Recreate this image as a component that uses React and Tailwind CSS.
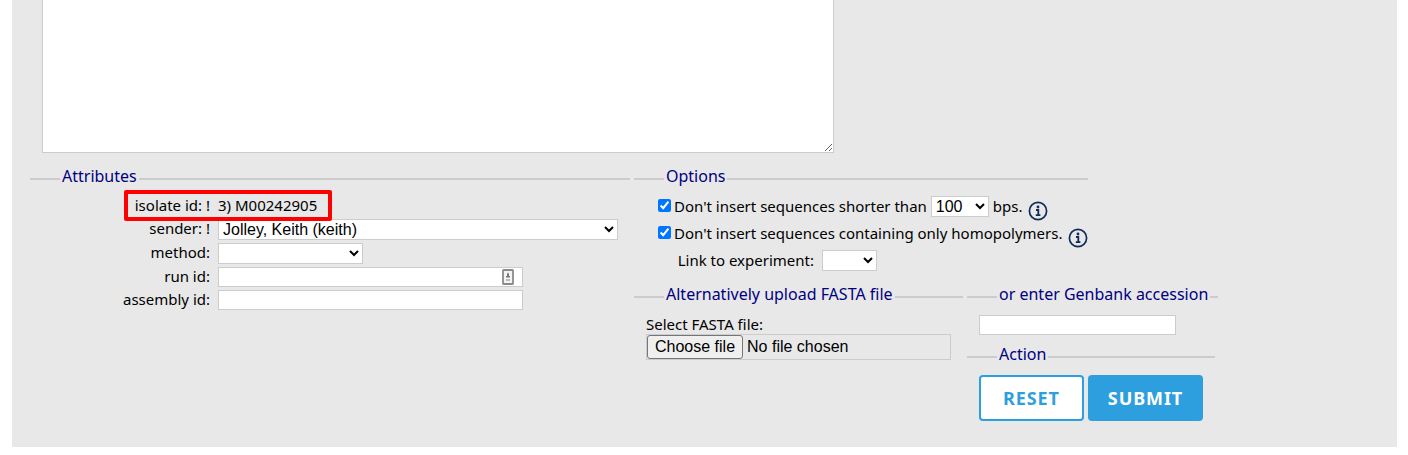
import { useState } from "react";

const control = "border border-[#ccc] bg-white font-['Liberation_Sans',sans-serif] text-base leading-5 text-black";

function Section({ title, className, children }) {
  return (
    <fieldset className={`min-w-0 border-t-2 border-[#ccc] ${className}`}>
      <legend className="ml-[30px] px-0.5 pb-1.5 font-['Noto_Sans',sans-serif] text-base leading-4 whitespace-nowrap text-[#000080]">{title}</legend>
      {children}
    </fieldset>
  );
}

function Info() {
  return (
    <button type="button" aria-label="Information" className="mt-2 ml-1.5 h-5 w-5 shrink-0 text-[#0f2c59]">
      <svg viewBox="0 0 20 20" className="h-5 w-5" fill="none" stroke="currentColor">
        <circle cx="10" cy="10" r="8.6" strokeWidth="1.7" />
        <circle cx="10" cy="6" r="1.4" fill="currentColor" stroke="none" />
        <path d="M8 9h2.3v5M7.8 14.2h4.6" strokeWidth="1.8" />
      </svg>
    </button>
  );
}

function Row({ id, label, className, children }) {
  return (
    <div className={`flex items-center ${className}`}>
      <label htmlFor={id} className="w-[180px] pb-0.5 text-right">{label}</label>
      <div className="ml-2 flex min-w-0 items-center">{children}</div>
    </div>
  );
}

export default function App() {
  const [sequence, setSequence] = useState("");
  return (
    <main className="bg-white pr-[11px] pb-2 pl-3 font-['Noto_Sans',sans-serif] text-[15px] leading-5 text-black">
      <form className="bg-[#e8e8e8] pb-[26px] pl-[18px]" onSubmit={(e) => e.preventDefault()}>
        <textarea
          aria-label="Sequence"
          value={sequence}
          onChange={(e) => setSequence(e.target.value)}
          className="ml-3 block h-[153px] w-[792px] max-w-full border border-t-0 border-[#ccc] bg-white"
        />
        <div className="mt-[15px] flex items-start gap-1">
          <Section title="Attributes" className="w-[600px] shrink-0">
            <div className="relative z-10 ml-[94px] flex h-[31px] w-[208px] items-center rounded-xs border-4 border-[#f00]">
              <span className="w-[82px] pb-0.5 text-right whitespace-nowrap">isolate id: !</span>
              <span className="ml-2 pb-0.5 whitespace-nowrap">3) M00242905</span>
            </div>
            <div className="-mt-1">
              <Row id="sender" label="sender: !" className="h-6">
                <select id="sender" className={`${control} h-[21px] w-[400px]`}>
                  <option>Jolley, Keith (keith)</option>
                </select>
              </Row>
              <Row id="method" label="method:" className="h-6">
                <select id="method" className={`${control} h-[21px] w-[145px]`}><option></option></select>
              </Row>
              <Row id="run" label="run id:" className="h-[23px]">
                <div className="relative">
                  <input id="run" type="text" className={`${control} block h-5 w-[305px]`} />
                  <svg viewBox="0 0 12 16" className="absolute top-0.5 right-[9px] h-4 w-3" aria-hidden="true">
                    <rect x="1" y="1" width="10" height="14" rx="0.6" fill="#f3f3f3" stroke="#8b8b8b" strokeWidth="1.8" />
                    <path d="M6 3.5 7 5v2h1V8.500H4V7h1V5z" fill="#777" />
                    <path d="M4 10h4v2H4z" fill="#bbb" />
                  </svg>
                </div>
              </Row>
              <Row id="assembly" label="assembly id:" className="h-[23px]">
                <input id="assembly" type="text" className={`${control} block h-5 w-[305px]`} />
              </Row>
            </div>
          </Section>
          <div>
            <Section title="Options" className="w-[454px]">
              <div className="flex flex-col pt-px pl-6">
                <div className="flex h-[27px] items-center pt-1">
                  <input id="short" type="checkbox" defaultChecked className="mr-[3px] mb-0.5 h-[13px] w-[13px] shrink-0" />
                  <label htmlFor="short" className="pb-0.5 whitespace-nowrap">Don't insert sequences shorter than</label>
                  <select aria-label="Minimum length" className={`${control} mx-1 h-[21px] w-[58px]`}><option>100</option></select>
                  <span className="pb-0.5">bps.</span>
                  <Info />
                </div>
                <div className="flex h-[27px] items-center pt-1">
                  <input id="homo" type="checkbox" defaultChecked className="mr-[3px] mb-0.5 h-[13px] w-[13px] shrink-0" />
                  <label htmlFor="homo" className="pb-0.5 whitespace-nowrap">Don't insert sequences containing only homopolymers.</label>
                  <Info />
                </div>
                <div className="flex h-[27px] items-center pt-1">
                  <label htmlFor="experiment" className="w-[156px] pb-0.5 text-right whitespace-nowrap">Link to experiment:</label>
                  <select id="experiment" className={`${control} ml-2 h-[21px] w-[55px]`}><option></option></select>
                </div>
              </div>
            </Section>
            <div className="mt-[14px] flex items-start gap-1">
              <Section title="Alternatively upload FASTA file" className="w-[329px]">
                <div className="px-3 pt-1.5">
                  <label htmlFor="fasta" className="block">Select FASTA file:</label>
                  <div className="relative flex h-[26px] items-center border border-[#ccc] font-['Liberation_Sans',sans-serif] text-base">
                    <span className="rounded-[3px] border border-[#767676] bg-[#efefef] px-[7px] leading-[22px]">Choose file</span>
                    <span className="ml-1">No file chosen</span>
                    <input id="fasta" type="file" className="absolute inset-0 h-full w-full opacity-0" />
                  </div>
                </div>
              </Section>
              <div>
                <Section title="or enter Genbank accession" className="w-[251px]">
                  <div className="px-3 pt-[7px]">
                    <input aria-label="Genbank accession" type="text" className={`${control} block h-5 w-[197px]`} />
                  </div>
                </Section>
                <Section title="Action" className="mt-[11px] w-[248px]">
                  <div className="flex gap-1 pt-[7px] pl-3 font-['Noto_Sans',sans-serif] text-lg font-bold tracking-wider">
                    <button type="reset" className="h-[46px] w-[105px] rounded border-2 border-[#2e9fde] bg-white text-[#2e9fde]">RESET</button>
                    <button type="submit" className="h-[46px] w-[115px] rounded bg-[#2e9fde] text-white">SUBMIT</button>
                  </div>
                </Section>
              </div>
            </div>
          </div>
        </div>
      </form>
    </main>
  );
}
